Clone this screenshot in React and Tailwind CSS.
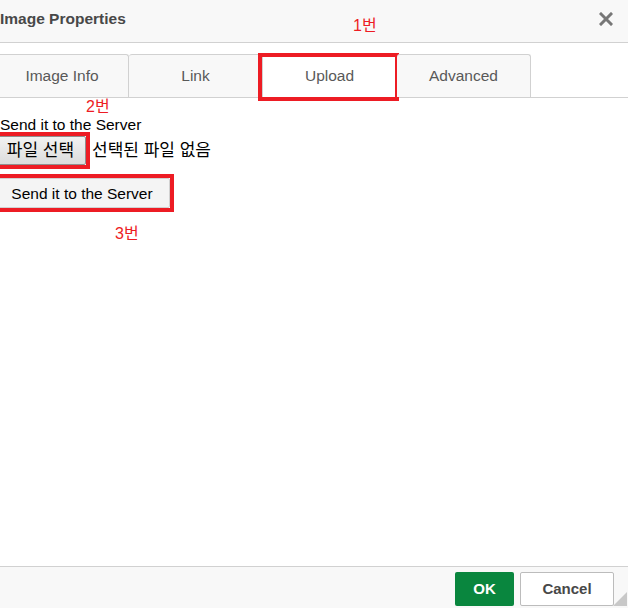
const tabs = ["Image Info", "Link", "Upload", "Advanced"];

const App = () => {
  return (
    <div
      className="w-[628px] h-[608px] flex flex-col bg-white overflow-hidden relative"
      style={{ fontFamily: '"Liberation Sans", Arial, "Noto Sans CJK KR", sans-serif' }}
    >
      {/* HEADER */}
      <div className="h-[43px] shrink-0 bg-[#f8f8f8] border-b border-[#d1d1d1] flex justify-between items-start relative">
        <div className="pt-[10px] text-[15.5px] leading-[17px] font-bold text-[#484848]">
          Image Properties
        </div>
        <svg width="14" height="14" viewBox="0 0 14 14" className="mt-[12px] mr-[15px]">
          <path d="M2 2 L12 12 M12 2 L2 12" stroke="#777" strokeWidth="3" strokeLinecap="square" />
        </svg>
        <span className="absolute left-[353px] top-[16px] text-[16px] leading-[20px] text-[#ed1c24]">
          1번
        </span>
      </div>

      {/* TABS */}
      <div className="pt-[11px] border-b border-[#d1d1d1] flex">
        <div className="flex -ml-[5px]">
          {tabs.map((tab, i) => (
            <div
              key={tab}
              className={`relative w-[134px] h-[43px] flex items-center justify-center text-[15.5px] text-[#595959] border-t border-r border-[#d1d1d1] rounded-t-[3px] ${
                i === 0 ? "border-l" : ""
              } ${tab === "Upload" ? "bg-white" : "bg-[#f8f8f8]"}`}
            >
              {tab}
              {tab === "Upload" && (
                <span className="absolute -left-[5px] -right-[3px] -top-[2px] -bottom-[4px] border-4 border-[#ed1c24]" />
              )}
            </div>
          ))}
        </div>
      </div>

      {/* CONTENT */}
      <div className="flex-1 flex flex-col items-start text-black">
        <div className="ml-[86px] text-[16px] leading-[18px] text-[#ed1c24]">2번</div>
        <div className="text-[15.5px] leading-[17px]">Send it to the Server</div>
        <div className="flex items-center mt-[-1px]">
          <div className="-ml-[9px] border-4 border-[#ed1c24]">
            <button className="h-[29px] w-[91px] text-center text-[17px] leading-[20px] bg-gradient-to-b from-[#f2f2f2] to-[#dcdcdc] border border-[#8f8f8f] rounded-[2px]">
              파일 선택
            </button>
          </div>
          <span className="ml-[2px] text-[17px] leading-[20px]">선택된 파일 없음</span>
        </div>
        <div className="mt-[5px] -ml-[10px] border-4 border-[#ed1c24]">
          <button className="h-[30px] w-[176px] text-center text-[15.5px] leading-[17px] bg-[#f4f4f4] border border-[#d1d1d1] rounded-[2px]">
            Send it to the Server
          </button>
        </div>
        <div className="ml-[115px] mt-[13px] text-[16px] leading-[18px] text-[#ed1c24]">3번</div>
      </div>

      {/* FOOTER */}
      <div className="h-[42px] shrink-0 bg-[#f8f8f8] border-t border-[#d1d1d1] flex justify-end items-start pt-[5px] pr-[14px] gap-[6px] relative">
        <button className="h-[34px] w-[59px] bg-[#09863e] text-white font-bold text-[15px] rounded-[2px]">
          OK
        </button>
        <button className="h-[34px] w-[94px] bg-white border border-[#bcbcbc] text-[#484848] font-bold text-[15px] rounded-[2px]">
          Cancel
        </button>
        <svg width="14" height="14" viewBox="0 0 14 14" className="absolute right-[1px] bottom-[2px]">
          <path d="M14 0 L14 14 L0 14 Z" fill="#c8c8c8" />
        </svg>
      </div>
    </div>
  );
};

export default App;
